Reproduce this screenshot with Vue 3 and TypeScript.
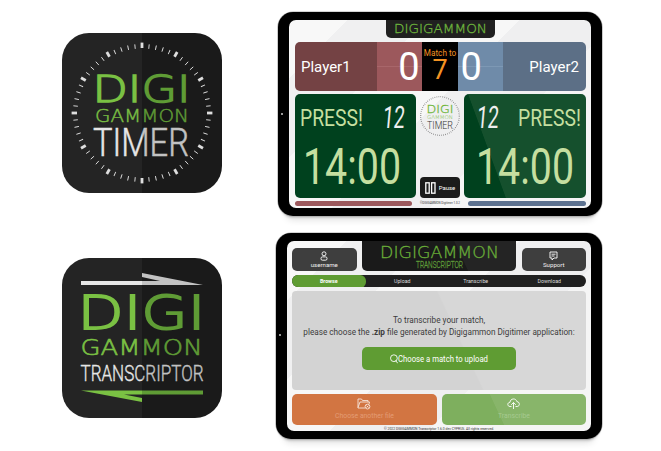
<script setup lang="ts">
import { h } from 'vue'

interface FitProps { text: string; w: number; cap: number; ratio?: number }

// A single line of text stretched to a given width and capital height.
const Fit = (p: FitProps) =>
  h('svg', { width: p.w, height: p.cap, viewBox: `0 0 ${p.w} ${p.cap}`, style: { overflow: 'visible', display: 'block', flex: 'none' } }, [
    h('text', { x: 0, y: p.cap, 'font-size': p.cap / (p.ratio ?? 0.711), textLength: p.w, lengthAdjust: 'spacingAndGlyphs', fill: 'currentColor' }, p.text),
  ])
Fit.props = ['text', 'w', 'cap', 'ratio']

const ticks = Array.from({ length: 60 }, (_, i) => i)
const tabs: string[] = ['Browse', 'Upload', 'Transcribe', 'Download']
</script>

<template>
  <main class="page">
    <svg class="app-icon" viewBox="0 0 160 160">
      <defs>
        <linearGradient id="bg" gradientUnits="userSpaceOnUse" x1="0" x2="160" y1="0" y2="0">
          <stop offset=".5" stop-color="#242424" /><stop offset=".5" stop-color="#1a1a1a" />
        </linearGradient>
        <linearGradient id="green" gradientUnits="userSpaceOnUse" x1="0" x2="160" y1="0" y2="0">
          <stop offset=".5" stop-color="#7ac143" /><stop offset=".5" stop-color="#5f9c35" />
        </linearGradient>
        <linearGradient id="white" gradientUnits="userSpaceOnUse" x1="0" x2="160" y1="0" y2="0">
          <stop offset=".5" stop-color="#e6e6e6" /><stop offset=".5" stop-color="#c2c2c2" />
        </linearGradient>
      </defs>
      <rect width="160" height="160" rx="27" fill="url(#bg)" />
      <g stroke="#dedede">
        <line v-for="i in ticks" :key="i" x1="80" x2="80" :y1="i % 5 ? 11 : 9.6" :y2="i % 5 ? 15.5 : 15" :stroke-width="i % 5 ? 0.9 : 2.8" :transform="`rotate(${i * 6} 80 80)`" />
      </g>
      <g class="wide" fill="url(#green)">
        <text x="30.5" y="68.8" font-size="36.5" textLength="98" lengthAdjust="spacingAndGlyphs" stroke="url(#green)" stroke-width="1.4">DIGI</text>
        <text x="33" y="88.8" font-size="16.8" textLength="94" lengthAdjust="spacingAndGlyphs" stroke="url(#green)" stroke-width=".4">GAMMON</text>
      </g>
      <text class="segment" x="31" y="123" font-size="38" textLength="96" lengthAdjust="spacingAndGlyphs" fill="url(#white)" stroke="url(#white)" stroke-width=".5">TIMER</text>
    </svg>

    <section class="tablet timer">
      <i class="camera"></i>
      <div class="screen">
        <header class="brand wide"><Fit text="DIGIGAMMON" :w="93" :cap="8.8" :ratio="0.729" /></header>
        <div class="score">
          <div class="name red">Player1</div>
          <div class="points rose">0</div>
          <div class="match"><span>Match to</span><b>7</b></div>
          <div class="points sky">0</div>
          <div class="name slate">Player2</div>
        </div>
        <div class="play">
          <div class="clock segment">
            <div class="status"><Fit text="PRESS!" :w="63" :cap="17" /><Fit class="turn" text="12" :w="22" :cap="22" /></div>
            <Fit class="time" text="14:00" :w="98" :cap="36" />
          </div>
          <div class="middle">
            <svg class="dial" viewBox="0 0 42 42">
              <circle cx="21" cy="21" r="19.3" fill="none" stroke="#666" stroke-width="1.2" stroke-dasharray=".6 1.42" />
              <g class="wide" fill="#70b63b">
                <text x="7.5" y="18" font-size="11" textLength="27" lengthAdjust="spacingAndGlyphs" stroke="#70b63b" stroke-width=".3">DIGI</text>
                <text x="8" y="23.6" font-size="5" textLength="26" lengthAdjust="spacingAndGlyphs">GAMMON</text>
              </g>
              <text class="segment" x="8" y="33.5" font-size="11.5" textLength="26" lengthAdjust="spacingAndGlyphs" fill="#333">TIMER</text>
            </svg>
            <div class="pause">
              <svg width="11" height="12" viewBox="0 0 11 12" fill="none" stroke="#fff" stroke-width="1.3"><rect x=".8" y=".8" width="3.4" height="10.4" /><rect x="6.6" y=".8" width="3.4" height="10.4" /></svg>
              Pause
            </div>
          </div>
          <div class="clock right segment">
            <div class="status"><Fit class="turn" text="12" :w="22" :cap="22" /><Fit text="PRESS!" :w="63" :cap="17" /></div>
            <Fit class="time" text="14:00" :w="98" :cap="36" />
          </div>
        </div>
        <div class="bars"><i></i><Fit text="©DIGIGAMMON Digitimer 1.0.2" :w="40" :cap="2.4" /><i></i></div>
      </div>
    </section>

    <svg class="app-icon" viewBox="0 0 160 160">
      <rect width="160" height="160" rx="27" fill="url(#bg)" />
      <path d="M19 23H98L80 19V15L141 27H19Z" fill="url(#white)" />
      <path d="M19 132.5H141V136.5H62L80 140V144Z" fill="url(#green)" />
      <g class="wide" fill="url(#green)">
        <text x="15.5" y="71" font-size="47" textLength="128" lengthAdjust="spacingAndGlyphs" stroke="url(#green)" stroke-width="1.9">DIGI</text>
        <text x="18.5" y="97.3" font-size="21.5" textLength="122" lengthAdjust="spacingAndGlyphs" stroke="url(#green)" stroke-width=".6">GAMMON</text>
      </g>
      <text class="segment" x="18.5" y="123" font-size="22.5" textLength="123" lengthAdjust="spacingAndGlyphs" fill="url(#white)" stroke="url(#white)" stroke-width=".4">TRANSCRIPTOR</text>
    </svg>

    <section class="tablet transcriptor">
      <i class="camera"></i>
      <div class="screen">
        <header class="top">
          <div class="tool">
            <svg width="8" height="10" viewBox="0 0 8 10" fill="none" stroke="#fff" stroke-width=".9"><circle cx="4" cy="2.8" r="2" /><rect x="1" y="5.9" width="6" height="3.3" rx="1.4" /></svg>
            <span>username</span>
          </div>
          <div class="title">
            <span class="wide"><Fit text="DIGIGAMMON" :w="119" :cap="11.6" :ratio="0.729" /></span>
            <span class="segment"><Fit text="TRANSCRIPTOR" :w="47" :cap="6.7" /></span>
          </div>
          <div class="tool">
            <svg width="9" height="10" viewBox="0 0 9 10" fill="none" stroke="#fff" stroke-width=".9"><path d="M1 1H8V7H5L3 9V7H1ZM2.5 3.2H6.5M2.5 5H5.5" /></svg>
            <span>Support</span>
          </div>
        </header>
        <nav><span v-for="t in tabs" :key="t">{{ t }}</span></nav>
        <div class="content">
          <p>To transcribe your match,</p>
          <p class="line">please choose the <b>.zip</b> file generated by Digigammon Digitimer application:</p>
          <div class="choose">
            <svg width="8" height="10" viewBox="0 0 8 10" fill="none" stroke="#fff" stroke-width=".9"><circle cx="3.9" cy="4.2" r="3.4" /><path d="M5.5 6.5L7.8 9.3" /></svg>
            <Fit text="Choose a match to upload" :w="90" :cap="5.9" />
          </div>
        </div>
        <div class="actions">
          <div class="other">
            <svg width="14" height="12" viewBox="0 0 14 12" fill="none" stroke="#f6e4da" stroke-width=".9"><path d="M8 10H1V1H4.5L5.5 2.5H11V4M1 9.5L3 4H12.5L12 6" /><circle cx="10.5" cy="8.6" r="2.4" /><path d="M9.5 7.6L11.5 9.6M11.5 7.6L9.5 9.6" /></svg>
            <Fit class="label" text="Choose another file" :w="59" :cap="5.3" />
          </div>
          <div class="send">
            <svg width="13" height="12" viewBox="0 0 13 12" fill="none" stroke="#fff" stroke-width=".9"><path d="M4.5 8.5H3C0 8.3 .1 4.5 3 4.3C3.2 .2 9 -.2 9.8 3.5C13.2 3.8 13 8.3 10.3 8.5H8.5M6.5 11V4.5M4.2 6.8L6.5 4.5L8.8 6.8" /></svg>
            <Fit class="label" text="Transcribe" :w="32" :cap="5.3" />
          </div>
        </div>
        <footer><Fit text="© 2022 DIGIGAMMON Transcriptor 1.6.0 dev CYPRUS. All rights reserved." :w="110" :cap="2.5" /></footer>
      </div>
    </section>
  </main>
</template>

<style>
body { background: #fff; overflow: hidden; }
</style>

<style scoped>
* { box-sizing: border-box; }
.page { width: 661px; height: 451px; display: grid; grid-template-columns: 160px 326px; grid-template-rows: 204px 206px; column-gap: 54px; row-gap: 17px; padding: 11.5px 0 0 62px; font-family: Roboto, sans-serif; }
.app-icon { width: 160px; height: 160px; margin-top: 21px; }
.app-icon:nth-of-type(2) { margin-top: 25px; }
.wide { font-family: "DejaVu Sans Light", "DejaVu Sans", sans-serif; font-weight: 200; }
.segment { font-family: Roboto, sans-serif; font-weight: 300; }

.tablet { position: relative; background: #000; border-radius: 15px; box-shadow: 0 0 0 .6px #aaa, 0 4px 3px -3px #a4a4a4, 0 12px 7px -8px #e2e2e2; }
.timer { margin-left: 2px; width: 324px; height: 204px; padding: 8px 11px; }
.transcriptor { width: 326px; height: 206px; padding: 8.5px 11px 8px 10.5px; }
.camera { position: absolute; left: 3px; top: 101px; width: 2px; height: 2px; border-radius: 50%; background: #ccc; }
.screen { position: relative; height: 100%; overflow: hidden; border-radius: 7px; background: linear-gradient(135deg, #f8f8f8 0 12%, #f0f0f1 12% 28%, #f7f7f7 28% 47%, #efeff0 47% 67%, #f5f5f5 67%); }

.timer .screen { padding: 0 5.5px; display: flex; flex-direction: column; }
.brand { align-self: center; width: 109px; height: 18.5px; border-radius: 0 0 5px 5px; background: #202020; color: #6cb33c; display: flex; align-items: center; justify-content: center; }
.brand svg, .title svg { stroke: currentColor; stroke-width: .3px; }
.score { height: 49px; margin-top: 3.5px; display: flex; border-radius: 5px; overflow: hidden; color: #fff; }
.name { width: 82.5px; font-size: 15px; line-height: 50px; padding: 0 6.5px; }
.red { background: #744244; }
.slate { background: #5c6f86; text-align: right; }
.points { width: 45px; font-size: 38px; line-height: 50px; padding: 0 2.5px; }
.rose { background: linear-gradient(#9c585c 49%, #a8666a 49% 51%, #9c585c 51%); text-align: right; }
.sky { background: linear-gradient(#6f8ba9 49%, #7d98b4 49% 51%, #6f8ba9 51%); }
.match { width: 36px; background: #000; color: #f39323; display: flex; flex-direction: column; align-items: center; padding-top: 6px; font-size: 8.2px; line-height: 11px; white-space: nowrap; }
.match b { font-weight: 400; font-size: 27px; line-height: 23px; }
.play { height: 104px; margin-top: 3.5px; display: flex; justify-content: space-between; }
.clock { width: 121.5px; border-radius: 5px; background: #00411e; color: #c5dfa0; padding: 12px 11px 0 5px; }
.right { background: linear-gradient(70deg, #00411e 26%, #15502d 26.5%); padding: 12px 5px 0 13px; }
.status { display: flex; justify-content: space-between; align-items: center; height: 22px; font-weight: 400; }
.turn { color: #eee; transform: skewX(-5deg); }
.time { margin: 19.5px 0 0 3px; font-weight: 400; }
.right .time { margin-left: -1.5px; }
.middle { width: 42px; display: flex; flex-direction: column; align-items: center; justify-content: space-between; }
.dial { width: 42px; height: 42px; margin-top: 1px; }
.pause { width: 40px; height: 21px; border-radius: 4px; background: #1b1b1b; color: #fff; display: flex; align-items: center; justify-content: center; gap: 3px; font-size: 6px; }
.bars { display: flex; align-items: center; justify-content: space-between; height: 5px; margin-top: 2.5px; color: #333; }
.bars i { width: 117.5px; height: 5px; border-radius: 3px; background: #9c585c; }
.bars i:last-child { background: #5d7290; }

.transcriptor .screen { padding: 0 5px 0 5.5px; }
.top { display: flex; justify-content: space-between; align-items: flex-end; height: 30px; }
.tool { width: 64.5px; height: 23px; border-radius: 5px; background: #3e3e3e; color: #f0f0f0; display: flex; flex-direction: column; align-items: center; padding-top: 3px; font-size: 6.1px; line-height: 8px; }
.title { width: 153.5px; height: 30px; border-radius: 0 0 5px 5px; background: linear-gradient(65deg, #1a1a1a 63%, #242424 63.5%); color: #69ae38; display: flex; flex-direction: column; align-items: center; padding-top: 5px; gap: 3.5px; }
.title .segment { color: #5f9a39; }
nav { margin-top: 4px; height: 11.5px; border-radius: 6px; overflow: hidden; background: #202020; color: #ddd; display: grid; grid-template-columns: repeat(4, 1fr); text-align: center; font-size: 5.3px; line-height: 12.5px; }
nav span:first-child { background: #5f9c33; color: #fff; font-weight: 700; border-radius: 0 6px 6px 0; }
.content { margin-top: 4px; height: 99px; border-radius: 4px; background: linear-gradient(65deg, #d3d3d3 56%, #d7d7d7 56.5%); color: #3c3c3c; display: flex; flex-direction: column; align-items: center; padding-top: 23px; font-size: 8.2px; line-height: 12.3px; white-space: nowrap; }
p { margin: 0; }
.choose { margin-top: 9px; width: 153.5px; height: 23px; border-radius: 5px; background: #5f9c33; color: #fff; display: flex; align-items: center; justify-content: center; }
.actions { display: flex; justify-content: space-between; margin-top: 4px; }
.actions div { width: 144.5px; height: 31px; border-radius: 5px; display: flex; flex-direction: column; align-items: center; padding-top: 4px; }
.label { margin-top: 3.5px; }
.other { background: #d27542; color: #e39c75; }
.send { background: linear-gradient(65deg, #7eaf5e 39%, #88b56a 39.5%); color: #a6ca90; }
footer { display: flex; justify-content: center; margin-top: 2px; color: #333; }
</style>
